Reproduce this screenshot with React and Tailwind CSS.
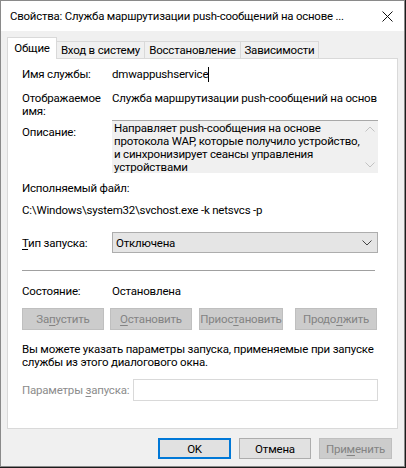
const font = "font-['Roboto','Liberation_Sans',sans-serif]";

function Chevron({ up, className }) {
  return (
    <svg width="10" height="6" viewBox="0 0 10 6" className={className}>
      <path
        d={up ? "M0.5 5.5 L5 1 L9.5 5.5" : "M0.5 0.5 L5 5 L9.5 0.5"}
        fill="none"
        stroke="currentColor"
        strokeWidth="1"
      />
    </svg>
  );
}

function U({ children }) {
  return <span className="underline underline-offset-2">{children}</span>;
}

function DisabledBtn({ children, className = "" }) {
  return (
    <div
      className={`h-[22px] flex items-center justify-center bg-[#cccccc] border border-[#bfbfbf] text-[#838383] ${className}`}
    >
      {children}
    </div>
  );
}

export default function App() {
  return (
    <div className={`w-[406px] h-[468px] bg-[#1c1c1c] text-[11.5px] tracking-[-0.2px] leading-[14px] text-black whitespace-nowrap ${font}`}>
      <div className="w-[405px] h-[467px] border border-[#8a8a8a] bg-[#f0f0f0] flex flex-col">
        {/* title bar */}
        <div className="h-[30px] bg-white flex items-center pl-[9px] pr-[8px] shrink-0">
          <span className="flex-1 text-[11.4px]">
            Свойства: Служба маршрутизации push-сообщений на основе ...
          </span>
          <svg width="11" height="11" viewBox="0 0 11 11" className="mr-[3px]">
            <path d="M0.5 0.5 L10.5 10.5 M10.5 0.5 L0.5 10.5" stroke="#111" strokeWidth="1" />
          </svg>
        </div>

        <div className="flex-1 px-[6px] pt-[6px]">
          {/* tabs */}
          <div className="h-[22px] flex items-end relative z-10">
            <div className="h-[22px] w-[50px] bg-white border border-[#d9d9d9] border-b-0 flex items-center justify-center pb-[2px]">
              Общие
            </div>
            <div className="h-[18px] w-[88px] border border-[#d9d9d9] border-l-0 flex items-center justify-center">
              Вход в систему
            </div>
            <div className="h-[18px] w-[96px] border border-[#d9d9d9] border-l-0 flex items-center justify-center">
              Восстановление
            </div>
            <div className="h-[18px] w-[78px] border border-[#d9d9d9] border-l-0 flex items-center justify-center">
              Зависимости
            </div>
          </div>

          {/* panel */}
          <div className="h-[371px] -mt-px bg-white border border-[#d9d9d9] pl-[14px] pr-[18px] flex flex-col">
            <div className="mt-[7px] flex h-[16px] items-center">
              <span className="w-[90px]">Имя службы:</span>
              <span>dmwappushservice</span>
              <span className="w-px h-[15px] bg-black" />
            </div>

            <div className="mt-[10px] flex h-[26px]">
              <div className="w-[90px] leading-[13px]">
                Отображаемое
                <br />
                имя:
              </div>
              <div className="leading-[13px] overflow-hidden w-[265px]">
                Служба маршрутизации push-сообщений на основе г
              </div>
            </div>

            <div className="mt-[2px] flex h-[53px]">
              <div className="w-[90px] pt-[6px] leading-[13px]">Описание:</div>
              <div className="w-[266px] bg-[#f0f0f0] border-t border-[#a8a8a8] flex">
                <div className="flex-1 pl-[2px] pt-[1px] leading-[13px] overflow-hidden">
                  Направляет push-сообщения на основе
                  <br />
                  протокола WAP, которые получило устройство,
                  <br />
                  и синхронизирует сеансы управления
                  <br />
                  устройствами
                </div>
                <div className="w-[16px] flex flex-col items-center justify-between py-[5px] text-[#c2c2c2]">
                  <Chevron up />
                  <Chevron />
                </div>
              </div>
            </div>

            <div className="mt-[8px]">Исполняемый файл:</div>
            <div className="mt-[8px]">C:\Windows\system32\svchost.exe -k netsvcs -p</div>

            <div className="mt-[15px] flex items-center h-[21px]">
              <span className="w-[90px]">
                <U>Т</U>ип запуска:
              </span>
              <div className="w-[266px] h-[21px] bg-[#e5e5e5] border border-[#adadad] flex items-center pl-[3px] pr-[5px]">
                <span className="flex-1">Отключена</span>
                <Chevron className="text-[#444]" />
              </div>
            </div>

            <div className="mt-[17px] h-px bg-[#a0a0a0] w-[353px]" />

            <div className="mt-[13px] flex">
              <span className="w-[90px]">Состояние:</span>
              <span>Остановлена</span>
            </div>

            <div className="mt-[10px] flex gap-[6px] w-[356px]">
              <DisabledBtn className="w-[82px]">
                За<U>п</U>устить
              </DisabledBtn>
              <DisabledBtn className="w-[82px]">
                <U>О</U>становить
              </DisabledBtn>
              <DisabledBtn className="w-[84px] ml-px">
                Приос<U>т</U>ановить
              </DisabledBtn>
              <DisabledBtn className="w-[82px] ml-[6px]">
                Продо<U>л</U>жить
              </DisabledBtn>
            </div>

            <div className="mt-[13px] leading-[13px]">
              Вы можете указать параметры запуска, применяемые при запуске
              <br />
              службы из этого диалогового окна.
            </div>

            <div className="mt-[10px] flex items-center h-[22px]">
              <span className="w-[111px] text-[#8c8c8c]">
                Параметры <U>з</U>апуска:
              </span>
              <div className="w-[245px] h-[22px] border border-[#d9d9d9] bg-white" />
            </div>
          </div>

          {/* bottom buttons */}
          <div className="mt-[9px] flex justify-end gap-[8px] pr-[6px]">
            <div className="w-[73px] h-[21px] border-2 border-[#0078d7] bg-[#e1e1e1] flex items-center justify-center">
              OK
            </div>
            <div className="w-[72px] h-[21px] border border-[#adadad] bg-[#e1e1e1] flex items-center justify-center">
              Отмена
            </div>
            <DisabledBtn className="w-[73px] !h-[21px]">
              При<U>м</U>енить
            </DisabledBtn>
          </div>
        </div>
      </div>
    </div>
  );
}
